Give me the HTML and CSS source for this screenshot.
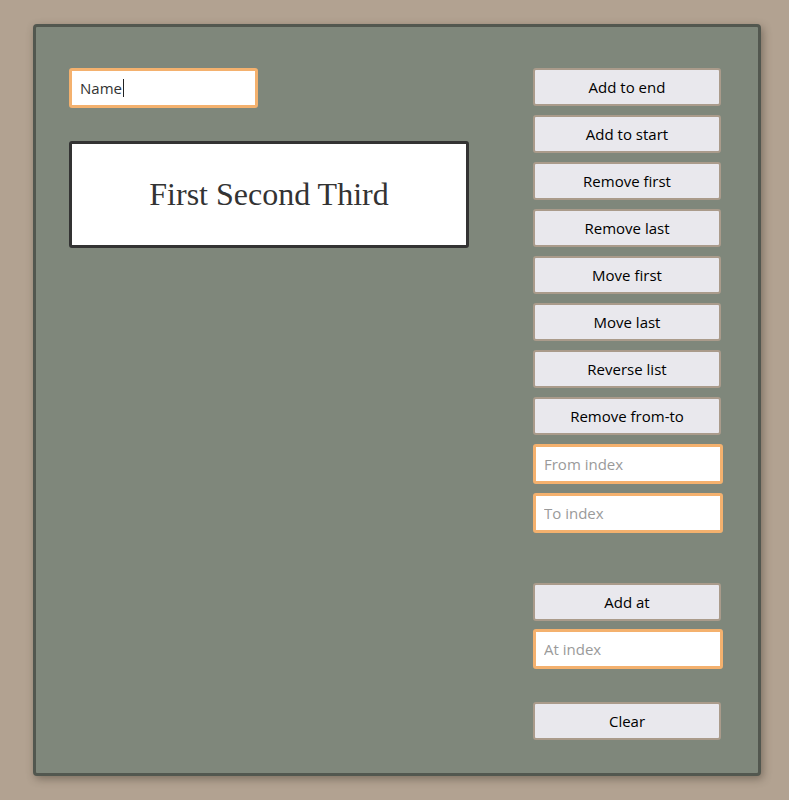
FILE: index.html
```html
<!DOCTYPE html>
<html>
<head>
<meta charset="utf-8">
<link rel="stylesheet" href="styles.css">
</head>
<body>
<div class="panel">
  <div class="left">
    <div class="name-input"><span class="name-text">Name</span><span class="caret"></span></div>
    <div class="display">First Second Third</div>
  </div>
  <div class="right">
    <button class="btn">Add to end</button>
    <button class="btn">Add to start</button>
    <button class="btn">Remove first</button>
    <button class="btn">Remove last</button>
    <button class="btn">Move first</button>
    <button class="btn">Move last</button>
    <button class="btn">Reverse list</button>
    <button class="btn">Remove from-to</button>
    <input class="field field-from" placeholder="From index">
    <input class="field field-to" placeholder="To index">
    <button class="btn btn-addat">Add at</button>
    <input class="field field-at" placeholder="At index">
    <button class="btn btn-clear">Clear</button>
  </div>
</div>
</body>
</html>
```

FILE: styles.css
```css
html, body {
  margin: 0;
  padding: 0;
}
body {
  background: #b2a291;
  font-family: "Open Sans", "Noto Sans", sans-serif;
  width: 789px;
  height: 800px;
  overflow: hidden;
}
.panel {
  box-sizing: border-box;
  margin: 24px 0 0 33px;
  width: 728px;
  height: 752px;
  background: #7f877b;
  border: 3px solid #52574f;
  border-radius: 4px;
  box-shadow: 2px 3px 8px rgba(60, 50, 40, 0.45);
  display: flex;
  justify-content: space-between;
  padding: 41px 35px 0 33px;
}
.left {
  display: flex;
  flex-direction: column;
  align-items: flex-start;
}
.name-input {
  box-sizing: border-box;
  width: 189px;
  height: 40px;
  background: #fff;
  border: 3px solid #f4b16e;
  border-radius: 3px;
  display: flex;
  align-items: center;
  padding-left: 8px;
  font-size: 15px;
  color: #333;
  margin-bottom: 33px;
}
.caret {
  display: inline-block;
  width: 1px;
  height: 18px;
  background: #222;
  margin-left: 1px;
}
.display {
  box-sizing: border-box;
  width: 400px;
  height: 107px;
  background: #fff;
  border: 3px solid #333;
  border-radius: 3px;
  display: flex;
  align-items: center;
  justify-content: center;
  font-family: "Liberation Serif", "Times New Roman", serif;
  font-size: 32px;
  color: #333;
}
.right {
  display: flex;
  flex-direction: column;
  align-items: flex-start;
  width: 190px;
}
.btn {
  box-sizing: border-box;
  width: 188px;
  height: 38px;
  background: #e9e8ed;
  border: 2px solid #aa9b8b;
  border-radius: 3px;
  font-family: "Open Sans", "Noto Sans", sans-serif;
  font-size: 15px;
  color: #000;
  margin: 0 0 9px 0;
  padding: 0;
}
.field {
  box-sizing: border-box;
  width: 190px;
  height: 40px;
  background: #fff;
  border: 3px solid #f4b16e;
  border-radius: 3px;
  font-family: "Open Sans", "Noto Sans", sans-serif;
  font-size: 15px;
  padding: 0 0 0 8px;
  margin: 0 0 9px 0;
  outline: none;
}
.field::placeholder {
  color: #9a9a9a;
}
.field-to {
  margin-bottom: 50px;
}
.btn-addat {
  margin-bottom: 8px;
}
.field-at {
  margin-bottom: 33px;
}
```
